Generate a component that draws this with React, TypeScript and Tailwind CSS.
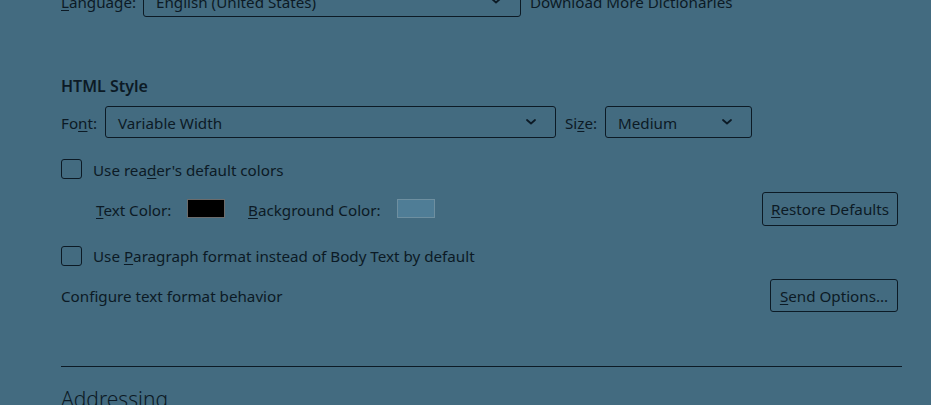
import React from "react";

const ink = "text-[#0c1a25]";

function Chevron() {
  return (
    <svg width="10" height="6" viewBox="0 0 10 6" className="shrink-0">
      <path d="M1 1 L5 4.5 L9 1" fill="none" stroke="#0c1a25" strokeWidth="1.8" strokeLinecap="round" strokeLinejoin="round" />
    </svg>
  );
}

function Select({ value, className }: { value: string; className: string }) {
  return (
    <div className={`flex items-center justify-between rounded-[3px] border border-[#0c1a25] pl-[12px] pr-[19px] ${className}`}>
      <span className="pt-[2px]">{value}</span>
      <Chevron />
    </div>
  );
}

function Checkbox() {
  return <div className="h-[20px] w-[21px] shrink-0 rounded-[3px] border border-[#0c1a25]" />;
}

function Button({ children, className }: { children: React.ReactNode; className: string }) {
  return (
    <div className={`flex items-center justify-center rounded-[3px] border border-[#0c1a25] ${className}`}>{children}</div>
  );
}

export default function App() {
  return (
    <div
      className={`h-[405px] w-[931px] overflow-hidden bg-[#436b80] pl-[61px] pr-[29px] text-[15.2px] ${ink}`}
      style={{ fontFamily: '"Noto Sans", "Open Sans", sans-serif' }}
    >
      {/* Spelling language row, scrolled partly out of view */}
      <div className="mt-[-15px] flex h-[32px] items-center">
        <span className="w-[82px] pt-[2px]">
          <u className="underline-offset-2">L</u>anguage:
        </span>
        <Select value="English (United States)" className="h-[32px] w-[378px]" />
        <span className="ml-[9px] pt-[2px]">Download More Dictionaries</span>
      </div>

      {/* HTML Style */}
      <div className="mt-[58px] text-[16px] font-semibold leading-[22px]">HTML Style</div>

      <div className="mt-[9px] flex h-[32px] items-center">
        <span className="w-[44px] pt-[2px]">
          Fo<u className="underline-offset-2">n</u>t:
        </span>
        <Select value="Variable Width" className="h-[32px] w-[451px]" />
        <span className="ml-[9px] w-[40px] pt-[2px]">
          Si<u className="underline-offset-2">z</u>e:
        </span>
        <Select value="Medium" className="h-[32px] w-[147px]" />
      </div>

      <div className="mt-[21px] flex h-[20px] items-center">
        <Checkbox />
        <span className="ml-[11px] pt-[2px]">
          Use rea<u className="underline-offset-2">d</u>er's default colors
        </span>
      </div>

      <div className="mt-[13px] flex h-[34px] items-center justify-between pl-[35px] pr-[4px]">
        <div className="flex items-center">
          <span className="w-[91px] pt-[2px]">
            <u className="underline-offset-2">T</u>ext Color:
          </span>
          <div className="h-[19px] w-[38px] border border-[#6b6b6b] bg-black" />
          <span className="ml-[23px] w-[149px] pt-[2px]">
            <u className="underline-offset-2">B</u>ackground Color:
          </span>
          <div className="h-[19px] w-[38px] border border-[#6e8fa0] bg-[#4f7d96]" />
        </div>
        <Button className="h-[34px] w-[136px]">
          <span className="pt-[1px]">
            <u className="underline-offset-2">R</u>estore Defaults
          </span>
        </Button>
      </div>

      <div className="mt-[19px] flex h-[21px] items-center">
        <Checkbox />
        <span className="ml-[11px] pt-[2px]">
          Use <u className="underline-offset-2">P</u>aragraph format instead of Body Text by default
        </span>
      </div>

      <div className="mt-[13px] flex h-[33px] items-center justify-between pr-[4px]">
        <span className="pt-[2px]">Configure text format behavior</span>
        <Button className="h-[33px] w-[128px]">
          <span className="pt-[1px]">
            <u className="underline-offset-2">S</u>end Options...
          </span>
        </Button>
      </div>

      <div className="mt-[54px] h-[1px] bg-[#0c1a25]" />

      <div className="mt-[18px] text-[21px] font-light leading-[28px]">Addressing</div>
    </div>
  );
}
